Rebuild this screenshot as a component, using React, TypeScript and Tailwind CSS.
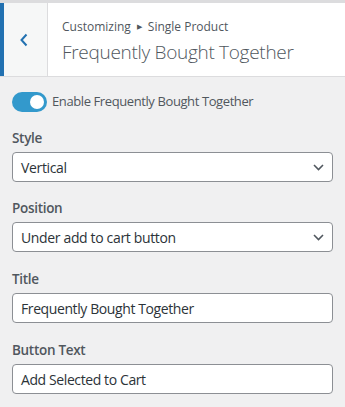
const font = { fontFamily: '"Open Sans", "Noto Sans", sans-serif' };

function Chevron() {
  return (
    <svg width="11" height="7" viewBox="0 0 11 7" className="text-[#50575e]">
      <path d="M1 1l4.5 4.5L10 1" fill="none" stroke="currentColor" strokeWidth="1.6" />
    </svg>
  );
}

function SelectField({ label, value }: { label: string; value: string }) {
  return (
    <div className="mt-[16px]">
      <div className="text-[13.5px] font-semibold leading-[20px] tracking-[-0.3px] text-[#50575e]">{label}</div>
      <div className="mt-[4px] flex h-[30px] items-center justify-between rounded-[4px] border border-[#8c8f94] bg-white pl-[8px] pr-[8px] text-[14px] tracking-[-0.35px] text-[#2c3338]">
        <span>{value}</span>
        <Chevron />
      </div>
    </div>
  );
}

function TextField({ label, value }: { label: string; value: string }) {
  return (
    <div className="mt-[17px]">
      <div className="text-[13.5px] font-semibold leading-[20px] tracking-[-0.3px] text-[#50575e]">{label}</div>
      <div className="mt-[4px] flex h-[30px] items-center rounded-[4px] border border-[#8c8f94] bg-white pl-[8px] text-[14px] tracking-[-0.4px] text-[#2c3338]">
        {value}
      </div>
    </div>
  );
}

export default function App() {
  return (
    <div className="h-[407px] w-[345px] overflow-hidden bg-[#f0f0f1]" style={font}>
      <div className="flex h-[77px] border-b border-t-[3px] border-[#dcdcde] bg-white">
        <div className="flex w-[48px] items-center justify-center border-l-4 border-r border-l-[#2271b1] border-r-[#dcdcde] bg-[#f6f7f7] pr-[4px]">
          <svg width="10" height="14" viewBox="0 0 10 14" className="text-[#2271b1]">
            <path d="M7.5 1.5L2.5 7l5 5.5" fill="none" stroke="currentColor" strokeWidth="2" />
          </svg>
        </div>
        <div className="flex flex-col justify-center pl-[14px] pt-[3px]">
          <div className="flex items-center gap-[6px] text-[12px] leading-[18px] text-[#50575e]">
            <span>Customizing</span>
            <span className="text-[7px]">▶</span>
            <span>Single Product</span>
          </div>
          <div className="mt-[3px] text-[19px] font-light leading-[26px] tracking-[-0.3px] text-[#50575e]">Frequently Bought Together</div>
        </div>
      </div>

      <div className="px-[12px] pt-[15px]">
        <div className="flex items-center gap-[5px]">
          <div className="flex h-[20px] w-[35px] items-center justify-end rounded-full bg-[#3399cc] pr-[3px]">
            <div className="h-[14px] w-[14px] rounded-full bg-white" />
          </div>
          <span className="text-[13px] tracking-[-0.4px] text-[#50575e]">Enable Frequently Bought Together</span>
        </div>

        <div>
          <SelectField label="Style" value="Vertical" />
          <SelectField label="Position" value="Under add to cart button" />
          <TextField label="Title" value="Frequently Bought Together" />
          <TextField label="Button Text" value="Add Selected to Cart" />
        </div>
      </div>
    </div>
  );
}
